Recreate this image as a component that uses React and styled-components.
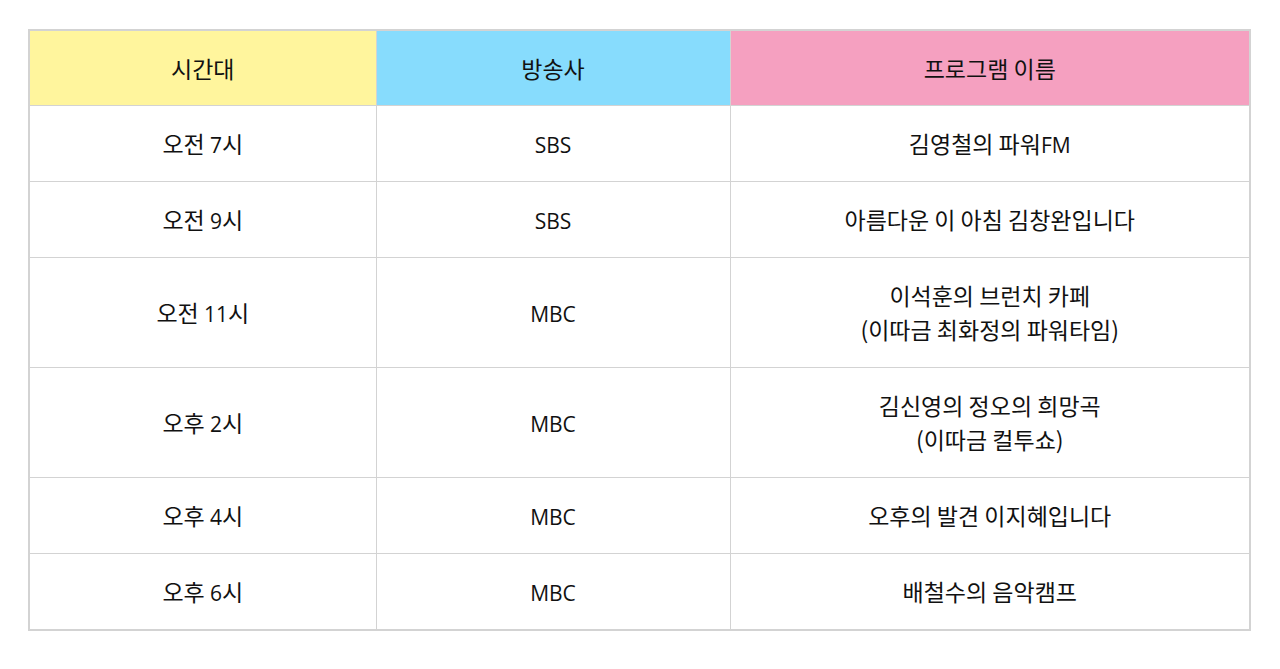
import React from 'react';
import styled, { createGlobalStyle } from 'styled-components';

const GlobalStyle = createGlobalStyle`
  body {
    margin: 0;
    background: #ffffff;
    font-family: "Noto Sans CJK KR", "Noto Sans", sans-serif;
  }
`;

const Page = styled.div`
  padding: 29px 29px 0 28px;
`;

const Table = styled.table`
  width: 1223px;
  border-collapse: collapse;
  table-layout: fixed;
  border: 2px solid #d3d3d3;
`;

const HeadCell = styled.th`
  background: ${props => props.bg};
  font-weight: 400;
  font-size: 23px;
  line-height: 34px;
  color: #111;
  padding: 20px 10px;
  border: 1px solid #d3d3d3;
  text-align: center;
`;

const Cell = styled.td`
  font-size: 23px;
  line-height: 34px;
  color: #111;
  padding: 20px 10px 21px;
  border: 1px solid #d3d3d3;
  text-align: center;
  vertical-align: middle;
`;

// latin letters and digits sit smaller next to the hangul
const Latin = styled.span`
  font-family: "Open Sans", "Noto Sans", sans-serif;
  font-size: 21px;
  line-height: 20px;
`;

const Mixed = ({ text }) =>
  text.split(/([A-Za-z0-9]+)/).map((part, i) =>
    /^[A-Za-z0-9]+$/.test(part) ? <Latin key={i}>{part}</Latin> : part
  );

const rows = [
  { time: '오전 7시', station: 'SBS', program: ['김영철의 파워FM'] },
  { time: '오전 9시', station: 'SBS', program: ['아름다운 이 아침 김창완입니다'] },
  { time: '오전 11시', station: 'MBC', program: ['이석훈의 브런치 카페', '(이따금 최화정의 파워타임)'] },
  { time: '오후 2시', station: 'MBC', program: ['김신영의 정오의 희망곡', '(이따금 컬투쇼)'] },
  { time: '오후 4시', station: 'MBC', program: ['오후의 발견 이지혜입니다'] },
  { time: '오후 6시', station: 'MBC', program: ['배철수의 음악캠프'] },
];

const App = () => {
  return (
    <Page>
      <GlobalStyle />
      <Table>
        <colgroup>
          <col style={{ width: '347px' }} />
          <col style={{ width: '354px' }} />
          <col />
        </colgroup>
        <thead>
          <tr>
            <HeadCell bg="#fff59d">시간대</HeadCell>
            <HeadCell bg="#87dcfd">방송사</HeadCell>
            <HeadCell bg="#f5a0c0">프로그램 이름</HeadCell>
          </tr>
        </thead>
        <tbody>
          {rows.map(row => (
            <tr key={row.time}>
              <Cell><Mixed text={row.time} /></Cell>
              <Cell><Mixed text={row.station} /></Cell>
              <Cell>
                {row.program.map((line, i) => (
                  <React.Fragment key={i}>
                    {i > 0 && <br />}
                    <Mixed text={line} />
                  </React.Fragment>
                ))}
              </Cell>
            </tr>
          ))}
        </tbody>
      </Table>
    </Page>
  );
};

export default App;
